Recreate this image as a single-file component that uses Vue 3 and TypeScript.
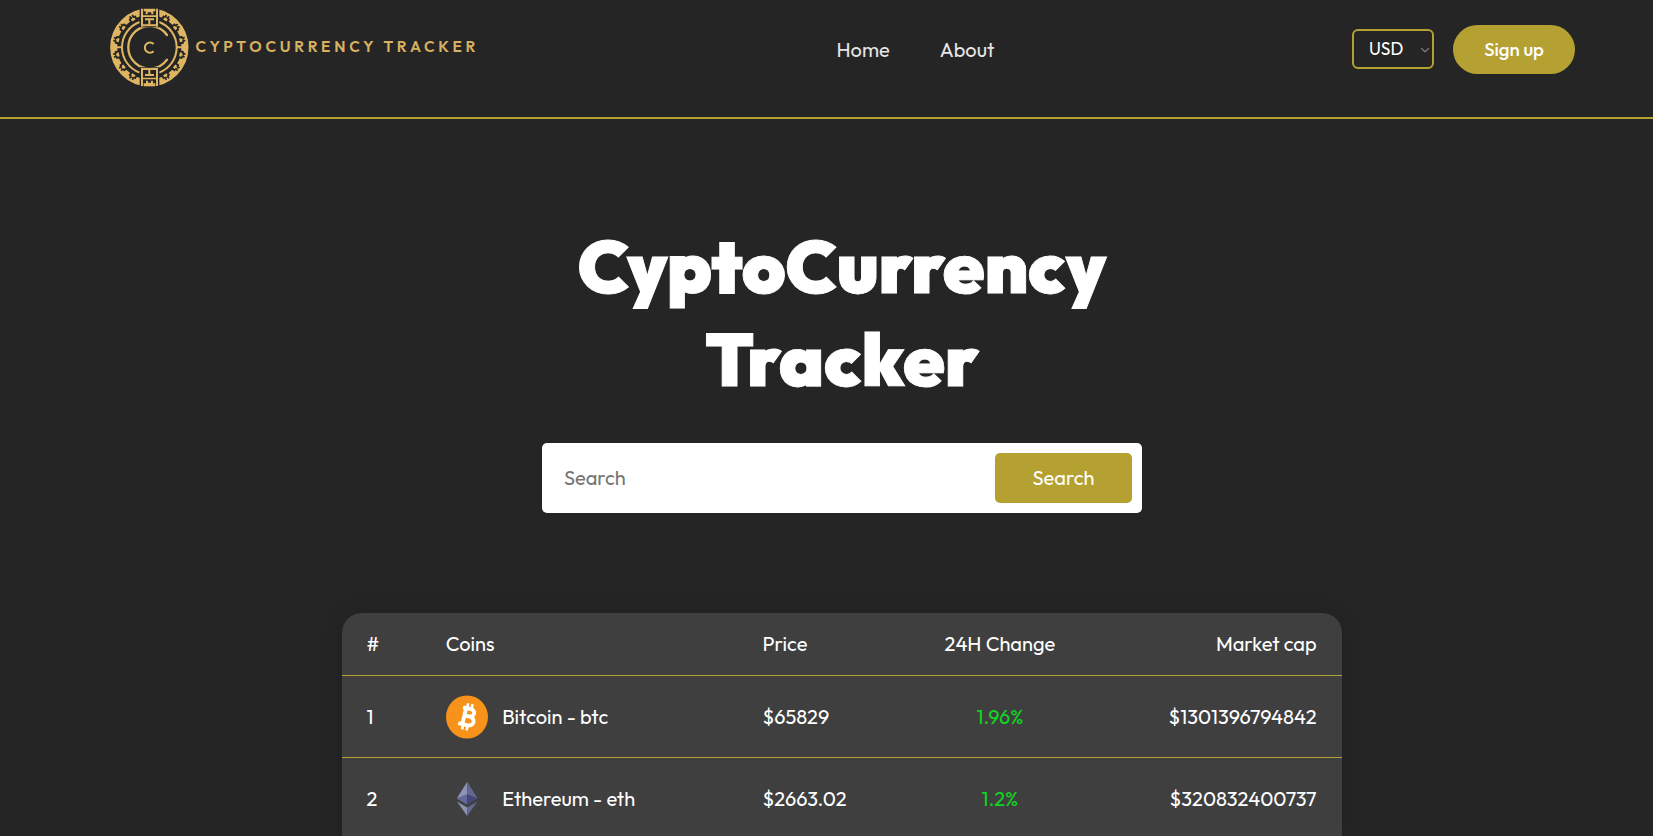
<script setup lang="ts">
import { ref } from 'vue'

interface Coin {
  rank: number
  name: string
  symbol: string
  price: string
  change: string
  cap: string
}

const currency = ref('USD')
const query = ref('')

const coins: Coin[] = [
  { rank: 1, name: 'Bitcoin', symbol: 'btc', price: '$65829', change: '1.96%', cap: '$1301396794842' },
  { rank: 2, name: 'Ethereum', symbol: 'eth', price: '$2663.02', change: '1.2%', cap: '$320832400737' }
]

const notchAngles = [-60, -37, -13, 13, 37, 60, 120, 143, 167, 193, 217, 240]
</script>

<template>
  <div class="page">
    <header class="navbar">
      <div class="logo">
        <svg class="emblem" viewBox="30 24 237 237" fill="none">
          <g stroke="#deb562">
            <circle cx="148" cy="142" r="107" stroke-width="21" />
            <path d="M119 66 A81 81 0 0 0 119 218 M177 66 A81 81 0 0 1 177 218" stroke-width="6" />
            <path d="M201 105 A64 64 0 1 0 201 179" stroke-width="7" stroke-linecap="round" />
            <path d="M50 142 H68 M228 142 H246" stroke-width="6" />
          </g>
          <g v-for="a in notchAngles" :key="a" :transform="`translate(148 142) rotate(${a + 90}) translate(0 -101)`" fill="#252525">
            <path d="M-12 7 V-3 H-7 V-9 H-2 V-5 H2 V-9 H7 V-3 H12 V7 Z" />
            <path d="M-6 8 V1 H-2 V-2 H2 V1 H6 V8 Z" fill="#deb562" />
          </g>
          <path d="M119 24 H178 V82 H119 Z M119 202 H178 V260 H119 Z" fill="#252525" />
          <g stroke="#deb562" stroke-width="6">
            <path d="M126 26 V80 M171 26 V80 M126 76 H171 M148 58 V76 M135 58 H162" />
            <path d="M126 204 V258 M171 204 V258 M126 207 H171 M148 208 V225 M135 225 H162" />
          </g>
          <path d="M131 26 H166 V34 H160 V43 H154 V37 H143 V43 H137 V34 H131 Z M129 46 H168 V51 H129 Z M129 233 H168 V238 H129 Z M131 259 V250 H138 V242 H144 V248 H153 V242 H159 V250 H166 V259 Z" fill="#deb562" />
          <path d="M161 132 A15.5 15.5 0 1 0 161 154" stroke="#deb562" stroke-width="6" />
        </svg>
        <span class="brand">CYPTOCURRENCY TRACKER</span>
      </div>
      <nav class="links">
        <a>Home</a>
        <a>About</a>
      </nav>
      <div class="actions">
        <div class="currency">
          <select v-model="currency">
            <option>USD</option>
            <option>EUR</option>
            <option>INR</option>
          </select>
          <svg class="chevron" viewBox="0 0 10 6" fill="none"><path d="M1 1 L5 4.8 L9 1" stroke="#777" stroke-width="1.2" /></svg>
        </div>
        <button class="signup">Sign up</button>
      </div>
    </header>

    <main class="home">
      <h1 class="title">CyptoCurrency<br>Tracker</h1>
      <form class="search" @submit.prevent>
        <input v-model="query" type="text" placeholder="Search">
        <button type="submit">Search</button>
      </form>

      <section class="table">
        <div class="row head">
          <p>#</p>
          <p>Coins</p>
          <p>Price</p>
          <p class="center">24H Change</p>
          <p class="right">Market cap</p>
        </div>
        <div v-for="coin in coins" :key="coin.rank" class="row">
          <p>{{ coin.rank }}</p>
          <div class="coin">
            <svg v-if="coin.symbol === 'btc'" viewBox="0 0 42 44">
              <ellipse cx="21" cy="22" rx="21" ry="21.6" fill="#f7931a" />
              <g transform="translate(21 21.7) rotate(13)" fill="none" stroke="#fff">
                <path d="M-5.9 -8.3 H1.5 C8 -8.3 7.4 -0.7 1.5 -0.7 H-2 M1.5 -0.7 C9.7 -0.7 9.4 8.3 1.8 8.3 H-7 M-2.8 -8.3 V8.3" stroke-width="3.9" />
                <path d="M-1.9 -13.4 V-8 M2.6 -13.4 V-8 M-1.9 8 V13.4 M2.6 8 V13.4" stroke-width="2.7" />
              </g>
            </svg>
            <svg v-else viewBox="0 0 42 44">
              <path d="M21.2 4.7 L10.8 21.4 L21.2 18 Z" fill="#8c93b5" />
              <path d="M21.2 4.7 L31.6 21.4 L21.2 18 Z" fill="#626890" />
              <path d="M10.8 21.4 L21.2 17 V27.8 Z" fill="#62689b" />
              <path d="M31.6 21.4 L21.2 17 V27.8 Z" fill="#434875" />
              <path d="M11 24.6 L21.2 30.6 V39 Z" fill="#8c93b5" />
              <path d="M31.4 24.6 L21.2 30.6 V39 Z" fill="#626890" />
            </svg>
            <p>{{ coin.name }} - {{ coin.symbol }}</p>
          </div>
          <p>{{ coin.price }}</p>
          <p class="center change">{{ coin.change }}</p>
          <p class="right">{{ coin.cap }}</p>
        </div>
      </section>
    </main>
  </div>
</template>

<style>
body { background: #252525; overflow: hidden; }
</style>

<style scoped>
* { box-sizing: border-box; margin: 0; }
.page {
  height: 836px;
  overflow: hidden;
  background: #252525;
  color: #fff;
  font-family: Outfit, Lato, sans-serif;
  font-size: 20px;
  line-height: 24px;
}
button, input, select { font-family: inherit; border: 0; outline: 0; }
.navbar {
  display: flex;
  align-items: center;
  height: 119px;
  padding: 0 78px 18px 110px;
  border-bottom: 2px solid #b4a132;
}
.logo { display: flex; align-items: center; width: 726.5px; margin-top: -4px; }
.emblem { width: 79px; height: 79px; }
.brand {
  margin: -4px 0 0 6.5px;
  color: #d9b162;
  font-size: 15.5px;
  font-weight: 600;
  letter-spacing: 3.72px;
  white-space: nowrap;
}
.links { display: flex; gap: 50px; color: #e6e6e6; }
.actions { display: flex; align-items: center; gap: 19px; margin-left: auto; }
.currency { position: relative; width: 82px; height: 40px; margin-bottom: 2px; }
.currency select {
  width: 82px;
  height: 40px;
  padding: 1px 16px 0 15px;
  border: 2px solid #b4a132;
  border-radius: 6px;
  background: transparent;
  color: #fff;
  font-size: 17.4px;
  appearance: none;
}
.chevron { position: absolute; right: 4px; top: 18px; width: 10px; height: 6px; }
.signup {
  width: 122px;
  height: 49px;
  padding: 0 0 1px;
  border-radius: 25px;
  background: #b4a132;
  color: #fff;
  font-size: 18.6px;
  font-weight: 500;
}
.home { display: flex; flex-direction: column; align-items: center; width: 1000px; margin: 100px 0 0 342px; }
.title {
  height: 187px;
  font-size: 74px;
  font-weight: 900;
  line-height: 93px;
  text-align: center;
  -webkit-text-stroke: 0.9px #fff;
}
.search {
  display: flex;
  align-items: center;
  width: 600px;
  height: 70px;
  margin-top: 37px;
  padding: 10px 10px 10px 22px;
  border-radius: 5px;
  background: #fff;
}
.search input { flex: 1; min-width: 0; padding: 0 0 2px; background: transparent; font-size: 20px; }
.search input::placeholder { color: #757575; }
.search button {
  width: 137px;
  height: 50px;
  padding: 0 0 2px;
  border-radius: 5px;
  background: #b4a132;
  color: #fff;
  font-size: 20px;
}
.table {
  width: 1000px;
  margin-top: 100px;
  border-radius: 20px 20px 0 0;
  background: #3f3f3f;
  box-shadow: 0 0 20px rgba(0, 0, 0, 0.15);
}
.row {
  display: grid;
  grid-template-columns: 0.5fr 2fr 1fr 1fr 1.5fr;
  align-items: center;
  height: 82px;
  padding: 0 25.4px 0 24.6px;
  border-bottom: 1px solid #b4a132;
}
.head { height: 63px; }
.coin { display: flex; align-items: center; gap: 14px; padding-left: 0.4px; }
.coin svg { width: 42px; height: 44px; }
.center { text-align: center; }
.right { text-align: right; }
.change { color: #0fd621; }
</style>
